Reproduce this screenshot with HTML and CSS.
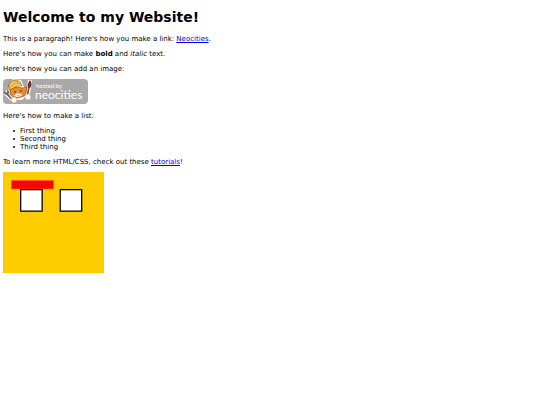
FILE: index.html
```
<!DOCTYPE html>
<html lang="en">
  <head>
    <meta charset="UTF-8">
    <meta name="viewport" content="width=device-width, initial-scale=1.0">
    <title>My Website</title>
    <link rel="stylesheet" href="styles.css">
  </head>
  <body>
    <h1>Welcome to my Website!</h1>

    <p>This is a paragraph! Here's how you make a link: <a href="https://neocities.org">Neocities</a>.</p>

    <p>Here's how you can make <strong>bold</strong> and <em>italic</em> text.</p>

    <p>Here's how you can add an image:</p>

    <svg class="site-button" viewBox="0 0 85 25" role="img" aria-label="Hosted by Neocities">
      <rect width="85" height="25" rx="4" fill="#a9a9a9"/>
      <!-- wrench -->
      <path d="M2 13l8 7" fill="none" stroke="#fff" stroke-width="5"/>
      <path d="M1 13l2 2 2-1 0-3M3 14l7 7" fill="none" stroke="#666" stroke-width="1.8"/>
      <!-- brush -->
      <path d="M27 1l-1 8-2 9" fill="none" stroke="#fff" stroke-width="4"/>
      <path d="M26 8l-2 10" fill="none" stroke="#67402c" stroke-width="1.5"/>
      <path d="M27 1c2 3 2 5 0 8h-2c-1-3 0-5 2-8z" fill="#8c2423"/>
      <!-- cat -->
      <path d="M5 9l2 8 4 4 8 0 4-4 2-9-4 0-3-7-8-1z" fill="#fff"/>
      <path d="M7 10l0 5 3 3 5 1 6-2 2-3 1-6-5 1-5-1z" fill="#e88c32" stroke="#6b3d1c" stroke-width=".6"/>
      <path d="M15 14l2 1 2 0-1 2-3 1-4-1 2-2z" fill="#fff7e9"/>
      <path d="M6 10c-2-4 1-8 6-9 4 0 6 3 7 6l-5 0-7 4z" fill="#e9b13a" stroke="#80551c" stroke-width=".6"/>
      <path d="M7 6c1-2 3-3 5-3M8 9l5-3 5 0" fill="none" stroke="#ffe17b"/>
      <circle cx="12" cy="13" r=".8" fill="#2c211c"/>
      <circle cx="18" cy="12" r=".8" fill="#2c211c"/>
      <path d="M14 16l1 1 2-1" fill="none" stroke="#98432e" stroke-width=".5"/>
      <circle cx="11" cy="21" r="3" fill="#fffaf2" stroke="#c79c72" stroke-width=".6"/>
      <circle cx="25" cy="18" r="3" fill="#fffaf2" stroke="#c79c72" stroke-width=".6"/>
      <text class="button-small" x="33" y="9">hosted by</text>
      <text class="button-name" x="32" y="20">neocities</text>
    </svg>

    <p>Here's how to make a list:</p>

    <ul>
      <li>First thing</li>
      <li>Second thing</li>
      <li>Third thing</li>
    </ul>

    <p>To learn more HTML/CSS, check out these <a href="https://neocities.org/tutorials">tutorials</a>!</p>

    <svg class="face" viewBox="0 0 240 240" aria-hidden="true">
      <rect width="240" height="240" fill="#fc0"/>
      <rect x="20" y="20" width="100" height="20" fill="#f00"/>
      <rect x="42" y="42" width="51" height="51" fill="#fff" stroke="#000" stroke-width="3"/>
      <rect x="136" y="42" width="51" height="51" fill="#fff" stroke="#000" stroke-width="3"/>
    </svg>
  </body>
</html>
```
FILE: styles.css
```
body {
  margin: 9px 3px;
  background-color: white;
  color: black;
  font-family: "DejaVu Sans", Verdana, sans-serif;
  font-size: 7px;
  line-height: 8px;
}

h1 {
  margin: 0 0 10px;
  font-size: 14px;
  line-height: 16px;
}

p {
  margin: 7px 0 6px;
}

a {
  color: #0000ee;
}

ul {
  margin: 7px 0;
  padding-left: 10px;
  list-style: none;
}

li {
  display: flex;
  align-items: center;
}

li::before {
  content: "";
  width: 2px;
  height: 2px;
  margin-right: 5px;
  border-radius: 50%;
  background-color: black;
}

.site-button {
  display: block;
  width: 85px;
  height: 25px;
  margin: 6px 0 8px;
}

.site-button text {
  fill: white;
  font-family: Lato, sans-serif;
}

.site-button .button-small {
  font-size: 6px;
}

.site-button .button-name {
  font-size: 12px;
}

.face {
  display: block;
  width: 101px;
  height: 101px;
}
```
